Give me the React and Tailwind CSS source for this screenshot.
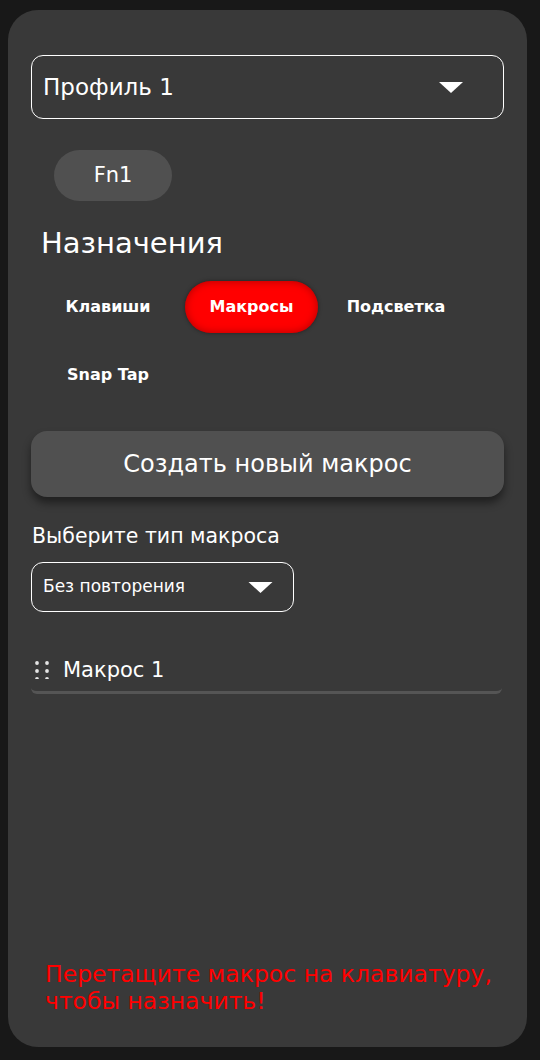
import React, { useState } from "react";

const Caret = ({ className }) => (
  <svg viewBox="0 0 24 11" className={className}>
    <path d="M0 0 L24 0 L12 11 Z" fill="white" />
  </svg>
);

const DragDots = () => (
  <svg viewBox="0 0 14 18" className="w-[14px] h-[18px]">
    {[0, 1, 2].map((r) =>
      [0, 1].map((c) => (
        <circle key={`${r}-${c}`} cx={2 + c * 10} cy={2 + r * 8} r="1.9" fill="#e5e5e5" />
      ))
    )}
  </svg>
);

const tabs = ["Клавиши", "Макросы", "Подсветка", "Snap Tap"];

export default function App() {
  const [activeTab, setActiveTab] = useState("Макросы");

  return (
    <div
      className="min-h-screen bg-[#181818] p-[8px] pt-[10px] pb-[13px] text-white"
      style={{ fontFamily: '"DejaVu Sans", "Noto Sans", sans-serif' }}
    >
      <div className="bg-[#393939] rounded-[30px] h-[1037px] w-[519px] px-[23px] pt-[45px] pb-[32px] flex flex-col">
        {/* profile select */}
        <div className="h-[64px] border border-white rounded-[12px] flex items-center justify-between pl-[11px] pr-[40px]">
          <span className="text-[23px]">Профиль 1</span>
          <Caret className="w-[24px] h-[11px]" />
        </div>

        <div className="mt-[31px] pl-[23px]">
          <button className="w-[118px] h-[51px] rounded-full bg-[#505050] text-[21px]">Fn1</button>
        </div>

        <h2 className="mt-[22px] pl-[10px] text-[29px] font-normal leading-[40px]">Назначения</h2>

        <div className="mt-[18px] grid grid-cols-[154px_133px_156px] justify-items-center gap-y-[16px]">
          {tabs.map((t) => (
            <button
              key={t}
              onClick={() => setActiveTab(t)}
              className={
                "h-[52px] w-[133px] rounded-full text-[16px] font-bold whitespace-nowrap " +
                (activeTab === t
                  ? "bg-[#ff0000] shadow-[inset_0_0_8px_rgba(120,0,0,0.6),0_0_4px_rgba(0,0,0,0.4)]"
                  : "")
              }
            >
              {t}
            </button>
          ))}
        </div>

        <button className="mt-[30px] h-[66px] w-[473px] rounded-[16px] bg-[#505050] text-[24px] shadow-[0_6px_8px_rgba(0,0,0,0.45)]">
          Создать новый макрос
        </button>

        <p className="mt-[25px] pl-[1px] text-[20.5px] leading-[28px]">Выберите тип макроса</p>

        <div className="mt-[12px] h-[50px] w-[263px] border border-white rounded-[12px] flex items-center justify-between pl-[11px] pr-[20px]">
          <span className="text-[17px]">Без повторения</span>
          <Caret className="w-[25px] h-[11px]" />
        </div>

        <div className="mt-[43px] w-[471px] border-b-[3px] border-[#555555] rounded-b-[6px] flex items-center pl-[4px] pb-[6px] gap-[14px]">
          <DragDots />
          <span className="text-[21px] leading-[30px]">Макрос 1</span>
        </div>

        <div className="flex-1" />

        <p className="pl-[14px] text-[#ff0000] text-[23.5px] leading-[27px]">
          Перетащите макрос на клавиатуру,
          <br />
          чтобы назначить!
        </p>
      </div>
    </div>
  );
}
